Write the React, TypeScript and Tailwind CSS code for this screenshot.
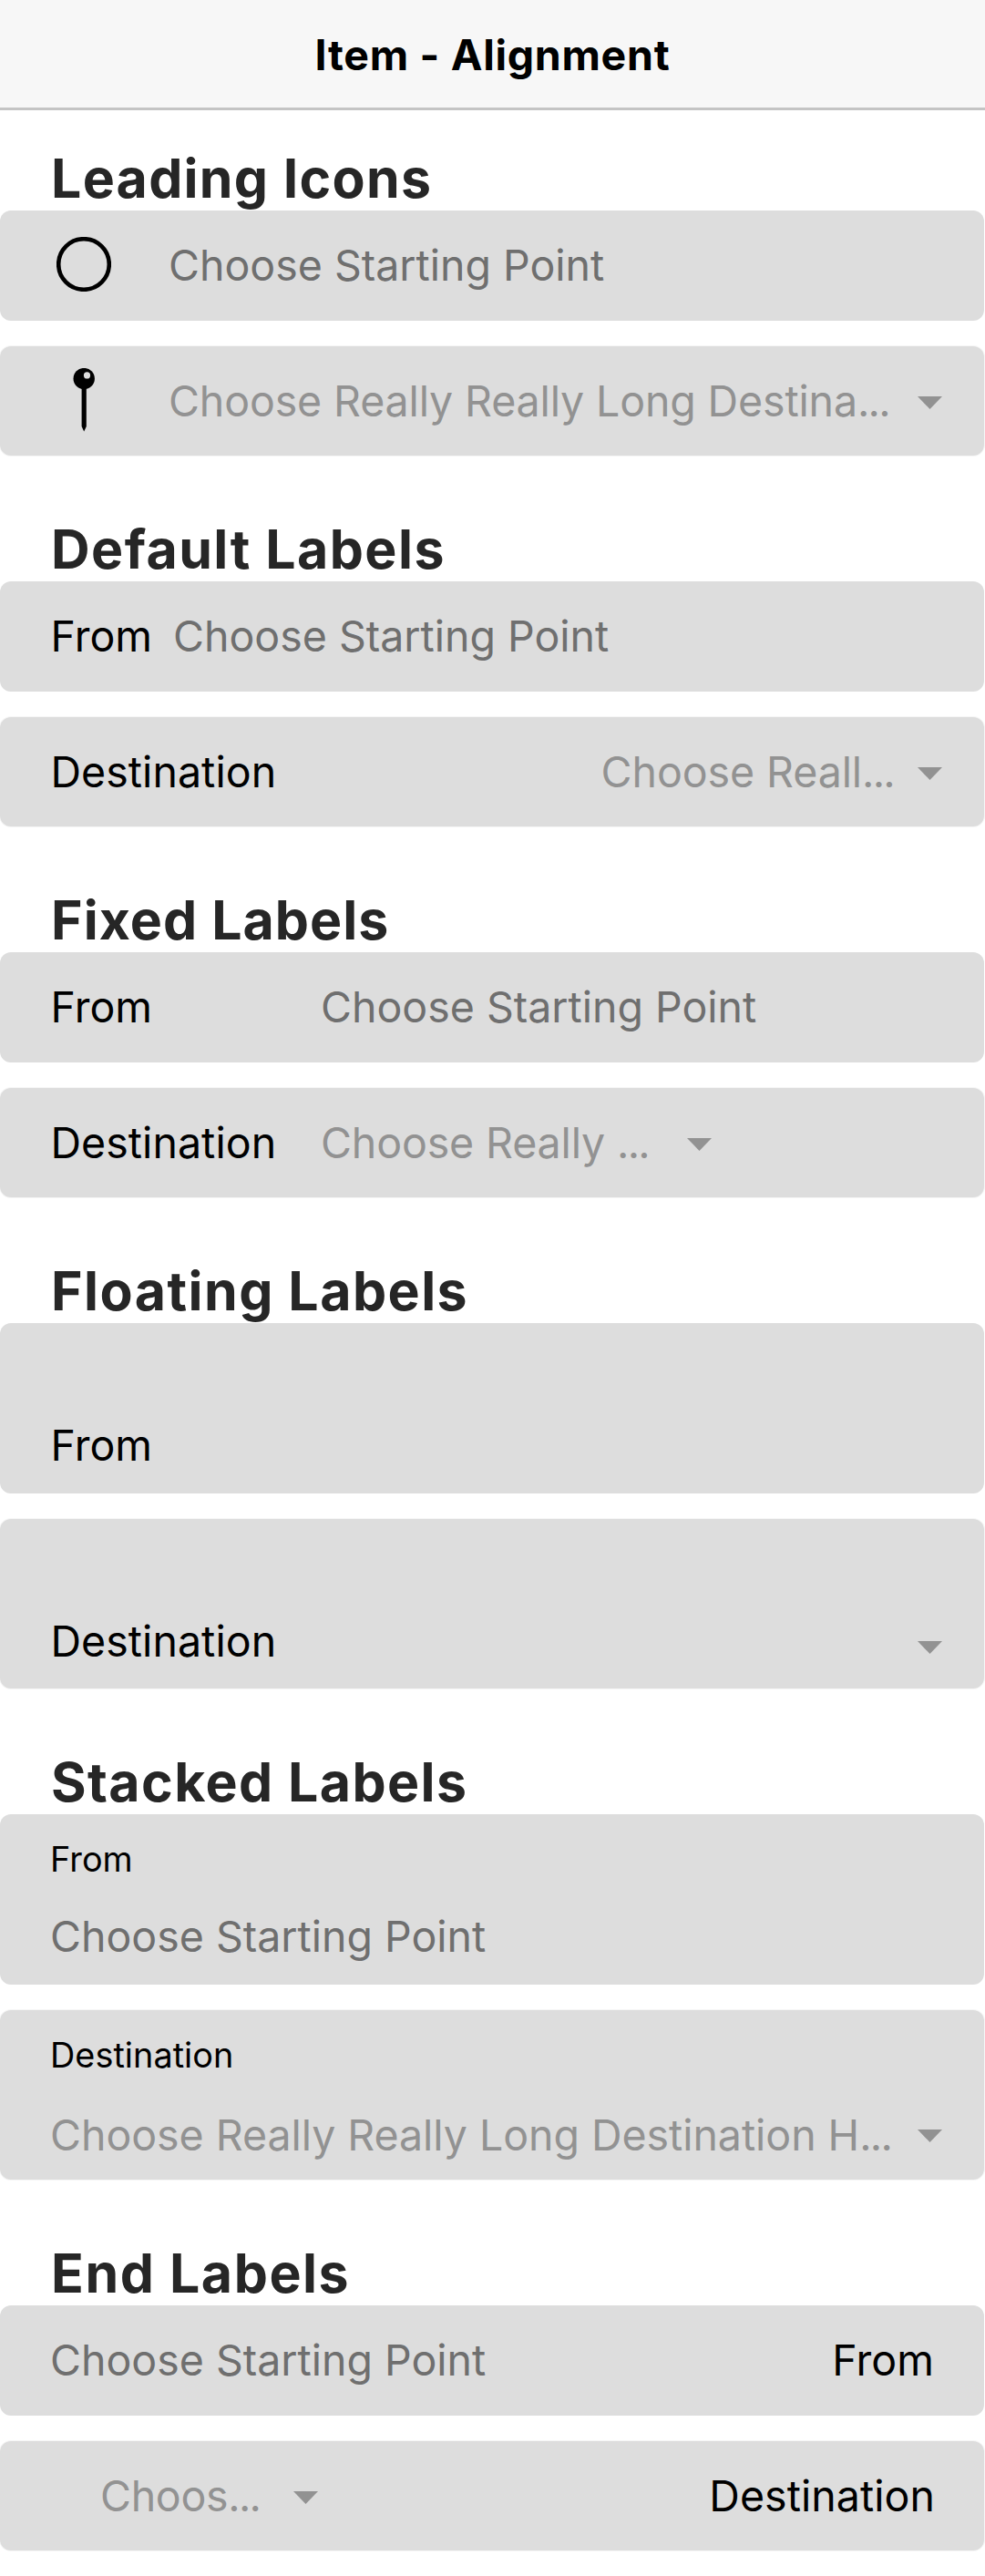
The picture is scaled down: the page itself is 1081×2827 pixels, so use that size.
import type { ReactNode } from "react";

function Section({ title, spacing, top, children }: { title: string; spacing: string; top: string; children: ReactNode }) {
  return (
    <section className={top}>
      <h2 className={`pl-[56px] h-[68px] leading-[68px] text-[59px] font-[650] text-[#262626] whitespace-nowrap ${spacing}`}>{title}</h2>
      <div className="flex flex-col gap-7 pt-px">{children}</div>
    </section>
  );
}

function Item({ className, children }: { className: string; children?: ReactNode }) {
  return <div className={`flex w-[1080px] rounded-[12px] bg-[#dddddd] whitespace-nowrap ${className}`}>{children}</div>;
}

const SOFT = "shadow-[0_0_0_1px_#f6f6f6]";

function Placeholder({ className = "" }: { className?: string }) {
  return <span className={`text-[#6f6f6f] tracking-[-0.01px] ${className}`}>Choose Starting Point</span>;
}

function Truncated({ text, className = "tracking-[-0.1px]" }: { text: string; className?: string }) {
  return (
    <span className={`text-[#929292] ${className}`}>
      {text}
      <span className="tracking-[-1.75px]">...</span>
    </span>
  );
}

function Caret({ className = "" }: { className?: string }) {
  return (
    <svg className={`shrink-0 ${className}`} width="27" height="14" viewBox="0 0 27 14">
      <path d="M0 0h27L13.5 14z" fill="#929292" />
    </svg>
  );
}

function Label({ text, className = "" }: { text: string; className?: string }) {
  return <span className={`text-black tracking-[0.05px] ${className}`}>{text}</span>;
}

export default function App() {
  return (
    <div className="min-h-[2827px] w-[1081px] overflow-hidden bg-white font-['Inter',sans-serif] text-[46.5px]">
      <header className="flex h-[121px] items-center justify-center border-b-[3px] border-[#c4c4c4] bg-[#f7f7f7] pt-[3px]">
        <h1 className="font-[650] tracking-[0.7px] text-black">Item - Alignment</h1>
      </header>

      <Section title="Leading Icons" spacing="tracking-[1.27px]" top="pt-[41px]">
        <Item className="h-[121px] items-center pl-[62px]">
          <svg className="mb-[3px] shrink-0" width="60" height="60" viewBox="0 0 60 60">
            <circle cx="30" cy="30" r="27.8" fill="none" stroke="#000" strokeWidth="4.6" />
          </svg>
          <Placeholder className="ml-[63px]" />
        </Item>
        <Item className={`h-[120px] items-center pl-[80px] ${SOFT}`}>
          <svg className="shrink-0" width="24" height="72" viewBox="0 0 24 72">
            <path d="M9.6 20h5.2v44L12.2 69.5 9.6 64z" />
            <circle cx="12.2" cy="11.6" r="11.7" />
            <circle cx="15.5" cy="7.9" r="3.6" fill="#ddd" />
          </svg>
          <Truncated text="Choose Really Really Long Destina" className="mt-[2px] ml-[81px] tracking-[-0.13px]" />
          <Caret className="mr-[46px] mb-[-3px] ml-auto" />
        </Item>
      </Section>

      <Section title="Default Labels" spacing="tracking-[1.46px]" top="pt-[69px]">
        <Item className="h-[121px] items-center pl-[55.5px]">
          <Label text="From" className="w-[134.5px]" />
          <Placeholder />
        </Item>
        <Item className={`h-[120px] items-center pl-[55.5px] ${SOFT}`}>
          <Label text="Destination" className="mt-[2px]" />
          <Truncated text="Choose Reall" className="mt-[2px] ml-auto tracking-[-0.08px]" />
          <Caret className="mr-[46px] mb-[-3px] ml-[26px]" />
        </Item>
      </Section>

      <Section title="Fixed Labels" spacing="tracking-[1.03px]" top="pt-[69px]">
        <Item className="h-[121px] items-center pl-[55.5px]">
          <Label text="From" className="w-[296.5px]" />
          <Placeholder />
        </Item>
        <Item className={`h-[120px] items-center pl-[55.5px] ${SOFT}`}>
          <Label text="Destination" className="mt-[2px] w-[296.5px]" />
          <Truncated text="Choose Really " className="mt-[2px] w-[402px] tracking-[-0.13px]" />
          <Caret className="mb-[-3px]" />
        </Item>
      </Section>

      <Section title="Floating Labels" spacing="tracking-[1.46px]" top="pt-[69px]">
        <Item className="h-[187px] items-end pb-[17px] pl-[55.5px]">
          <Label text="From" className="leading-[72px]" />
        </Item>
        <Item className={`h-[186px] items-end pb-4 pl-[55.5px] ${SOFT}`}>
          <Label text="Destination" className="leading-[72px]" />
          <Caret className="mr-[46px] mb-[22px] ml-auto" />
        </Item>
      </Section>

      <Section title="Stacked Labels" spacing="tracking-[1.41px]" top="pt-[69px]">
        <Item className="h-[187px] flex-col pt-[29px] pl-[55px]">
          <span className="h-10 text-[37.8px] leading-10 text-black tracking-[0.05px]">From</span>
          <Placeholder className="mt-[29px] leading-[72px]" />
        </Item>
        <Item className={`h-[186px] flex-col pt-[29px] pl-[55px] ${SOFT}`}>
          <span className="h-10 text-[37.8px] leading-10 text-black tracking-[0.05px]">Destination</span>
          <div className="mt-8 flex h-[72px] items-center leading-[72px]">
            <Truncated text="Choose Really Really Long Destination H" className="tracking-[-0.04px]" />
            <Caret className="mr-[46px] mb-[-1px] ml-auto" />
          </div>
        </Item>
      </Section>

      <Section title="End Labels" spacing="tracking-[1.55px]" top="pt-[69px]">
        <Item className="h-[121px] items-center pr-[55px] pl-[55px]">
          <Placeholder />
          <Label text="From" className="ml-auto" />
        </Item>
        <Item className={`h-[120px] items-center pr-[54px] pl-[110px] ${SOFT}`}>
          <Truncated text="Choos" className="mt-[2px] w-[212px] tracking-[-0.3px]" />
          <Caret className="mb-[-3px]" />
          <Label text="Destination" className="mt-[2px] ml-auto" />
        </Item>
      </Section>
    </div>
  );
}
